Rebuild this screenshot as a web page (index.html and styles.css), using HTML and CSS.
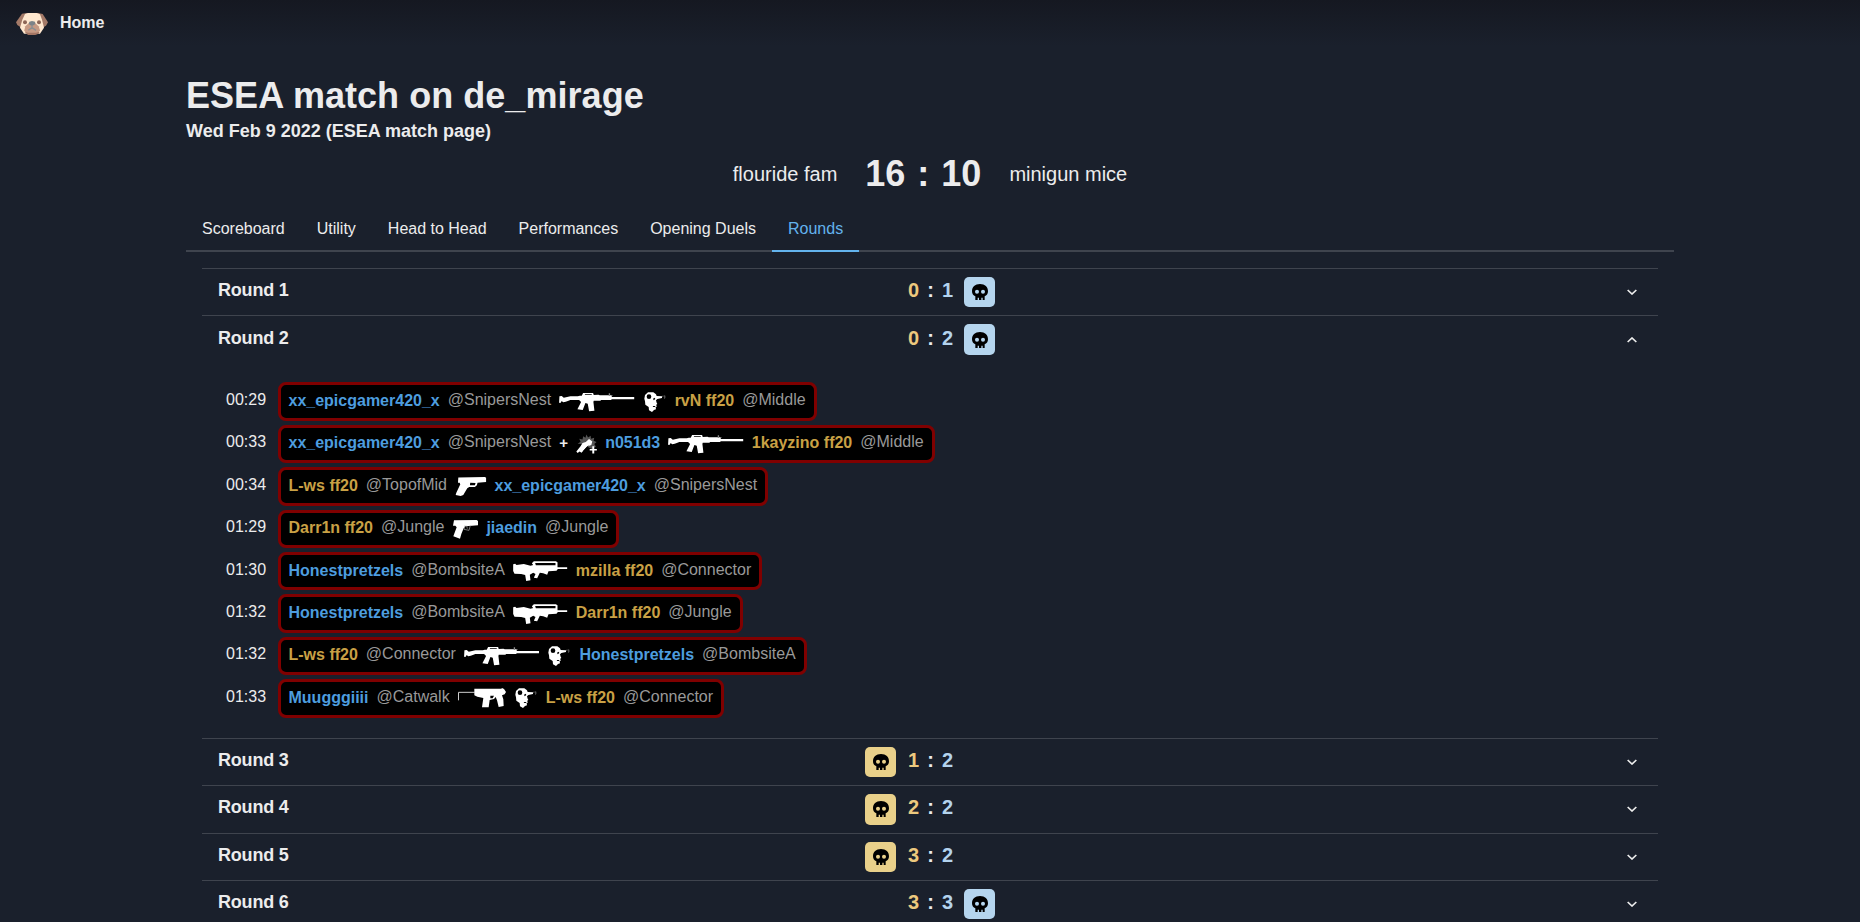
FILE: index.html
```html
<!DOCTYPE html>
<html lang="en">
<head>
<meta charset="utf-8">
<title>ESEA match on de_mirage</title>
<link rel="stylesheet" href="styles.css">
</head>
<body>
<svg class="defs" width="0" height="0">
  <symbol id="m4" viewBox="0 0 226 60">
    <path fill="#fff" fill-rule="evenodd" d="M1 13L8 12 14 17 34 13H56L62 11H68L72 3H102L104 9 118 8 122 10H158V15H226V22H158L156 24H126L124 26H104L103 30 106 56 90 58 86 35 79 33 71 54 55 52 66 30 60 24H34L20 29 12 31 8 27 4 33 0 32ZM78 6L77 8H98V6Z"/>
    <path fill="#888" d="M149 4h4v8h-4zM156 9h4v3h-4z"/>
  </symbol>
  <symbol id="headshot" viewBox="0 0 66 60">
    <path fill="#fff" fill-rule="evenodd" d="M12 1H28L36 7 38 12 54 13V18L40 21 36 25 38 32 40 36 36 39 39 43 35 46 36 52 30 54 24 60 15 55 14 45 4 38 3 28 1 20 3 9ZM15 7A7 7 0 1 0 15 21A7 7 0 1 0 15 7ZM28 42L26 45H32L35 42Z"/>
    <path fill="#000" d="M27 20l5-3 2 4-5 4z"/>
    <path fill="#666" d="M54 14l3-4 2 2-2 3zM60 10l4 1v7l-4 3 1-5z"/>
  </symbol>
  <symbol id="flash" viewBox="0 0 66 60">
    <path fill="#555" d="M32 1L37 10 45 5 46 14 56 11 54 20 63 24 56 30 61 38 48 45 20 30 5 29 14 23 10 14 20 16 22 6 29 11Z"/>
    <path fill="#fff" d="M40 15L50 22 47 33 34 38 17 57 11 53 5 58 1 53 14 37 20 27 30 24ZM50 37h6v8h8v5h-8v9h-6v-9h-8v-5h8z"/>
    <path fill="none" stroke="#000" stroke-width="2" d="M38 35L22 52"/>
  </symbol>
  <symbol id="glock" viewBox="0 0 95 60">
    <path fill="#fff" fill-rule="evenodd" d="M10 4L90 3 94 5V18L68 20 66 28 60 33H43L37 37 25 57 17 60 2 57 4 50 16 25 14 20 9 20ZM46 20L45 28H60L62 21Z"/>
  </symbol>
  <symbol id="p250" viewBox="0 0 78 60">
    <path fill="#fff" d="M6 4L74 3 78 6V19L60 20 40 22 35 28 28 45 24 59 4 52 14 25 10 20 3 20Z"/>
    <path fill="none" stroke="#aaa" stroke-width="2" d="M39 19l-3 12 15 3 4-15M44 20l2 9"/>
  </symbol>
  <symbol id="aug" viewBox="0 0 164 60">
    <path fill="#fff" fill-rule="evenodd" d="M0 10L6 8 10 12 32 9 52 14 60 12 56 7 62 1 128 1 133 4V19H162V24H134L130 29 106 31 102 41 90 37 80 35 72 52 62 50 67 39 60 35 50 41 52 58 39 60 36 42 24 39 4 38 0 30ZM66 6L68 13H127V6Z"/>
  </symbol>
  <symbol id="mac10" viewBox="0 0 144 60">
    <path fill="none" stroke="#ccc" stroke-width="3" d="M50 13H1.500V37"/>
    <path fill="#fff" fill-rule="evenodd" d="M49 2H130L132 0 138 3 144 12 140 19 132 22 136 34 137 54 122 57 117 37 113 27 108 33 95 36 92 58H72L76 30 58 26 49 22ZM97 23L97 31 104 31 108 23Z"/>
  </symbol>
  <symbol id="skull" viewBox="0 0 48 48">
    <path fill="#000" fill-rule="evenodd" d="M24 0C39 0 48 9 48 22C48 30 44 34 38 37V48H32V41H28V48H21V41H17V48H10V37C4 34 0 30 0 22C0 9 9 0 24 0ZM15 17A6 6 0 1 0 15 29A6 6 0 1 0 15 17ZM33 17A6 6 0 1 0 33 29A6 6 0 1 0 33 17Z"/>
  </symbol>
  <symbol id="chevron" viewBox="0 0 30 18">
    <path fill="none" stroke="#eee" stroke-width="5" d="M2 3L15 15 28 3"/>
  </symbol>
</svg>

<header class="nav">
  <svg class="pug" viewBox="0 0 96 66">
    <path fill="#a47a68" d="M18 2L32 0H66L80 3 96 28 90 38 80 44H16L4 36 0 28Z"/>
    <path fill="#ffe8cf" d="M27 3L36 0H62L72 4 78 20 84 44 72 62H24L12 44 19 20Z"/>
    <path fill="#c69a84" d="M38 31H58L68 40 72 52 66 61H30L25 52 28 40Z"/>
    <path fill="#a37563" d="M26 56L36 59H60L71 56 68 62 58 66H36Z"/>
    <circle cx="27" cy="28" r="6" fill="#8d6657"/><circle cx="69" cy="28" r="6" fill="#8d6657"/>
    <path fill="#7c8388" d="M40 26L48 24 57 26 58 33 50 38H46L38 33Z"/>
    <path fill="none" stroke="#8c8f91" stroke-width="4" d="M37 52L48 44 60 52M48 37V44"/>
  </svg>
  <a class="home">Home</a>
</header>

<main class="page">
  <h1 class="title">ESEA match on de_mirage</h1>
  <h2 class="subtitle">Wed Feb 9 2022 (ESEA match page)</h2>
  <section class="result">
    <span class="team">flouride fam</span>
    <span class="final">16 : 10</span>
    <span class="team">minigun mice</span>
  </section>
  <nav class="tabs">
    <a class="tab">Scoreboard</a><a class="tab">Utility</a><a class="tab">Head to Head</a><a class="tab">Performances</a><a class="tab">Opening Duels</a><a class="tab active">Rounds</a>
  </nav>

  <div class="rounds">
    <section class="round">
      <div class="round-head"><h3>Round 1</h3><div class="score"><i></i><b class="t">0</b><b>:</b><b class="ct">1</b><span class="badge ct-bg"><svg><use href="#skull"/></svg></span></div><svg class="chev"><use href="#chevron"/></svg></div>
    </section>
    <section class="round">
      <div class="round-head"><h3>Round 2</h3><div class="score"><i></i><b class="t">0</b><b>:</b><b class="ct">2</b><span class="badge ct-bg"><svg><use href="#skull"/></svg></span></div><svg class="chev up"><use href="#chevron"/></svg></div>
      <div class="kills">
        <div class="kill"><time>00:29</time><div class="feed"><b class="blue">xx_epicgamer420_x</b><span>@SnipersNest</span><svg class="m4"><use href="#m4"/></svg><svg class="hs"><use href="#headshot"/></svg><b class="gold">rvN ff20</b><span>@Middle</span></div></div>
        <div class="kill"><time>00:33</time><div class="feed"><b class="blue">xx_epicgamer420_x</b><span>@SnipersNest</span><b class="plus">+</b><svg class="fl"><use href="#flash"/></svg><b class="blue">n051d3</b><svg class="m4"><use href="#m4"/></svg><b class="gold">1kayzino ff20</b><span>@Middle</span></div></div>
        <div class="kill"><time>00:34</time><div class="feed"><b class="gold">L-ws ff20</b><span>@TopofMid</span><svg class="glock"><use href="#glock"/></svg><b class="blue">xx_epicgamer420_x</b><span>@SnipersNest</span></div></div>
        <div class="kill"><time>01:29</time><div class="feed"><b class="gold">Darr1n ff20</b><span>@Jungle</span><svg class="p250"><use href="#p250"/></svg><b class="blue">jiaedin</b><span>@Jungle</span></div></div>
        <div class="kill"><time>01:30</time><div class="feed"><b class="blue">Honestpretzels</b><span>@BombsiteA</span><svg class="aug"><use href="#aug"/></svg><b class="gold">mzilla ff20</b><span>@Connector</span></div></div>
        <div class="kill"><time>01:32</time><div class="feed"><b class="blue">Honestpretzels</b><span>@BombsiteA</span><svg class="aug"><use href="#aug"/></svg><b class="gold">Darr1n ff20</b><span>@Jungle</span></div></div>
        <div class="kill"><time>01:32</time><div class="feed"><b class="gold">L-ws ff20</b><span>@Connector</span><svg class="m4"><use href="#m4"/></svg><svg class="hs"><use href="#headshot"/></svg><b class="blue">Honestpretzels</b><span>@BombsiteA</span></div></div>
        <div class="kill"><time>01:33</time><div class="feed"><b class="blue">Muugggiiii</b><span>@Catwalk</span><svg class="mac"><use href="#mac10"/></svg><svg class="hs"><use href="#headshot"/></svg><b class="gold">L-ws ff20</b><span>@Connector</span></div></div>
      </div>
    </section>
    <section class="round">
      <div class="round-head"><h3>Round 3</h3><div class="score"><span class="badge t-bg"><svg><use href="#skull"/></svg></span><b class="t">1</b><b>:</b><b class="ct">2</b><i></i></div><svg class="chev"><use href="#chevron"/></svg></div>
    </section>
    <section class="round">
      <div class="round-head"><h3>Round 4</h3><div class="score"><span class="badge t-bg"><svg><use href="#skull"/></svg></span><b class="t">2</b><b>:</b><b class="ct">2</b><i></i></div><svg class="chev"><use href="#chevron"/></svg></div>
    </section>
    <section class="round">
      <div class="round-head"><h3>Round 5</h3><div class="score"><span class="badge t-bg"><svg><use href="#skull"/></svg></span><b class="t">3</b><b>:</b><b class="ct">2</b><i></i></div><svg class="chev"><use href="#chevron"/></svg></div>
    </section>
    <section class="round">
      <div class="round-head"><h3>Round 6</h3><div class="score"><i></i><b class="t">3</b><b>:</b><b class="ct">3</b><span class="badge ct-bg"><svg><use href="#skull"/></svg></span></div><svg class="chev"><use href="#chevron"/></svg></div>
    </section>
  </div>
</main>
</body>
</html>
```
FILE: styles.css
```css
* { box-sizing: border-box; }
html, body { height: 100%; overflow: hidden; }
body {
  margin: 0;
  background: #1a202c;
  color: #ececed;
  font: 16px/24px "Liberation Sans", Arial, sans-serif;
}
h1, h2, h3 { margin: 0; font-weight: 700; }
svg { display: block; flex: none; }
.defs { position: absolute; }

.nav {
  display: flex;
  align-items: center;
  gap: 12px;
  height: 46px;
  padding: 0 16px 0 16px;
  background: linear-gradient(#151821, #1a202c);
}
.pug { width: 32px; height: 22px; margin-top: 2px; }
.home { font-weight: 700; }

.page { width: 1488px; margin: 0 auto; }
.title { padding-top: 28px; font-size: 36px; line-height: 43px; letter-spacing: 0.04px; }
.subtitle { padding-top: 3px; font-size: 18px; line-height: 22px; }
.result {
  display: flex;
  justify-content: center;
  align-items: center;
  gap: 28px;
  height: 68px;
  padding-bottom: 4px;
}
.team { font-size: 20px; }
.final { font-size: 36px; font-weight: 700; word-spacing: 2px; }

.tabs { display: flex; height: 42px; border-bottom: 2px solid #3f444e; }
.tab { height: 42px; padding: 7px 16px 0; border-bottom: 2px solid transparent; }
.tab.active { color: #63b3ed; border-color: #63b3ed; }

.rounds { padding: 16px 16px 0; }
.round { border-top: 1px solid #3f444e; }
.round-head {
  display: grid;
  grid-template-columns: 1fr auto 1fr;
  align-items: center;
  height: 46.4px;
  padding: 0 16px;
}
.round-head h3 { font-size: 18px; margin-top: -4px; letter-spacing: -0.2px; }
.score { display: flex; align-items: center; font-size: 20px; }
.score i { width: 31px; }
.score b { width: 11px; margin-top: -4px; text-align: center; }
.score b.t { margin-left: 12px; margin-right: 6px; color: #ecc97e; }
.score b.ct { margin-left: 6px; margin-right: 11px; color: #b3d3ee; }
.badge {
  display: flex;
  align-items: center;
  justify-content: center;
  width: 31px;
  height: 30.4px;
  border-radius: 5px;
}
.badge svg { width: 16px; height: 16px; }
.t-bg { background: #e9d08a; }
.ct-bg { background: #b5d5ee; }
.chev { justify-self: end; width: 10px; height: 6px; margin-right: 5px; }
.chev.up { transform: scaleY(-1); }

.kills { padding: 17.6px 24px 18.4px; }
.kill { display: flex; align-items: center; height: 42.4px; gap: 10.5px; }
.kill time { width: 41px; margin-bottom: 3px; }
.feed {
  display: flex;
  align-items: center;
  gap: 8px;
  height: 38.4px;
  padding: 0 8px;
  border: 3px solid #800000;
  border-radius: 8px;
  background: #000;
}
.feed span { color: #999; margin-bottom: 3px; }
.feed b { margin-bottom: 1px; }
.feed .plus { width: 8.5px; font-size: 15px; }
.blue { color: #4d9ddf; }
.gold { color: #c9a145; }
.feed svg { height: 20px; }
.m4 { width: 75.5px; }
.hs { width: 24px; }
.fl { width: 21.5px; }
.glock { width: 31.5px; }
.p250 { width: 26px; }
.aug { width: 55px; }
.mac { width: 48px; }
```
